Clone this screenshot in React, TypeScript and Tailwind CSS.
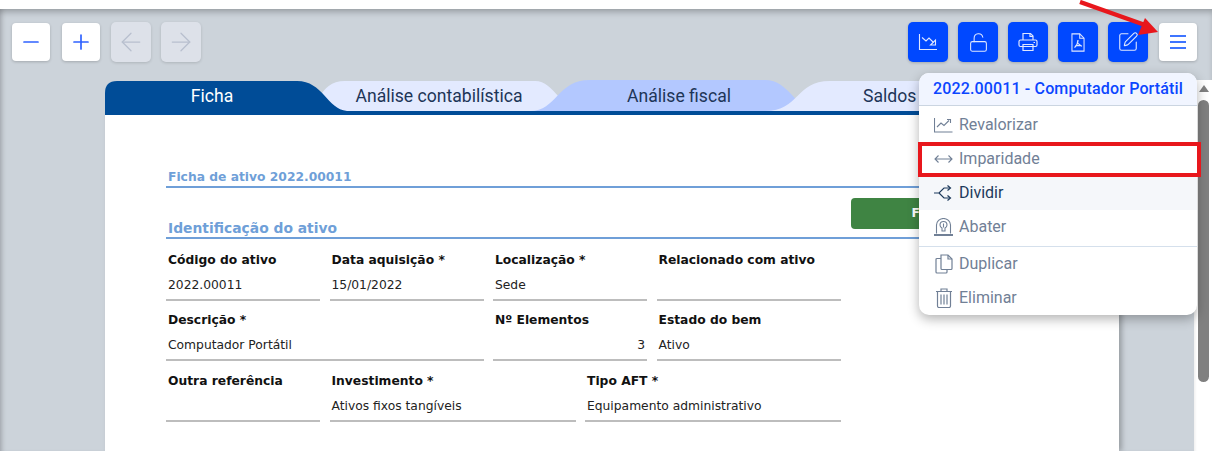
import React from 'react';
import { Minus, Plus, ArrowLeft, ArrowRight, LockOpen, SquarePen } from 'lucide-react';

const roboto = "font-['Roboto',sans-serif]";
const dejavu = "font-['DejaVu_Sans',sans-serif]";

const ChartDownIcon = () => (
    <svg width="20" height="20" viewBox="0 0 20 20" fill="none" stroke="currentColor" strokeWidth="1.1">
        <path d="M1.5 2v15.5h17.5" />
        <path d="M4 5.5l4 3.5 3-3 4.5 4.5" />
        <path d="M17.5 8v5h-5z" />
    </svg>
);

const PrintIcon = () => (
    <svg width="20" height="20" viewBox="0 0 20 20" fill="none" stroke="currentColor" strokeWidth="1.2">
        <path d="M5 8V1.5h7.5L15 4v4" />
        <path d="M12 1.5V4.5h3" />
        <rect x="1" y="8" width="18" height="6.5" rx="1.5" />
        <path d="M5 12.5h10v6H5z" />
        <path d="M15.5 10.5h1.5" />
    </svg>
);

const PdfIcon = () => (
    <svg width="18" height="19" viewBox="0 0 20 22" fill="none" stroke="currentColor" strokeWidth="1.2">
        <path d="M3 1h9l5 5v15H3z" />
        <path d="M12 1v5h5" />
        <path d="M10 8c0 4-2 7-4 9M10 12l4.500 3.500M7 14.500h7" strokeWidth="1.4" />
    </svg>
);

const ChartUpIcon = () => (
    <svg width="19" height="16" viewBox="0 0 19 16" fill="none" stroke="currentColor" strokeWidth="1.1">
        <path d="M.5 1v14h18" />
        <path d="M3 10l4-4 3 2.500 5-5" />
        <path d="M13 2.500h3.500V6" />
    </svg>
);

const SplitIcon = () => (
    <svg width="19" height="16" viewBox="0 0 19 16" fill="none" stroke="currentColor" strokeWidth="1.2">
        <path d="M0 8h5l5-5h6M5 8l5 5h6" />
        <path d="M13.500.5L16.500 3l-3 2.500M13.500 10.500l3 2.500-3 2.500" />
    </svg>
);

const TombIcon = () => (
    <svg width="19" height="18" viewBox="0 0 19 18" fill="none" stroke="currentColor" strokeWidth="1.1">
        <path d="M2.500 15.500V7a7 6.500 0 0 1 14 0v8.500" />
        <path d="M0 17h19" strokeWidth="2" />
        <path d="M6 7a3.500 3.500 0 0 1 7 0c0 1.500-1 2.500-2 3v3H8v-3c-1-.5-2-1.500-2-3z" />
        <path d="M9.500 5.500v4" />
    </svg>
);

const CopyIcon = () => (
    <svg width="18" height="20" viewBox="0 0 18 20" fill="none" stroke="currentColor" strokeWidth="1.2">
        <path d="M6 1h7l4 4v9.500a1 1 0 0 1-1 1H7a1 1 0 0 1-1-1z" />
        <path d="M13 1v4h4" />
        <path d="M6 4.500H2a1 1 0 0 0-1 1V18a1 1 0 0 0 1 1h9a1 1 0 0 0 1-1v-2.500" />
    </svg>
);

const TrashIcon = () => (
    <svg width="16" height="20" viewBox="0 0 16 20" fill="none" stroke="currentColor" strokeWidth="1.2">
        <path d="M0 3.500h16M5 3.500V1h6v2.500" />
        <path d="M1.500 3.500V18a1.500 1.500 0 0 0 1.500 1.500h10a1.500 1.500 0 0 0 1.500-1.500V3.500" />
        <path d="M5 6.500v10M8 6.500v10M11 6.500v10" />
    </svg>
);

const BlueButton = ({ children }: { children: React.ReactNode }) => (
    <button className="w-10 h-10 rounded-[5px] bg-[#0048ff] text-[#dfe7ff] flex items-center justify-center shadow-[0_1px_3px_rgba(0,0,0,0.2)]">
        {children}
    </button>
);

const WhiteButton = ({ children }: { children: React.ReactNode }) => (
    <button className="w-[38px] h-[38px] rounded-[4px] bg-white text-[#2f62ff] flex items-center justify-center shadow-[0_1px_3px_rgba(0,0,0,0.2)]">
        {children}
    </button>
);

const NavButton = ({ children }: { children: React.ReactNode }) => (
    <button className="w-10 h-10 rounded-[5px] bg-[#dde1e9] text-[#b8bfce] flex items-center justify-center shadow-[0_1px_3px_rgba(0,0,0,0.15)]">
        {children}
    </button>
);

const Field = ({ label, value, width, right }: { label: string; value?: string; width: string; right?: boolean }) => (
    <div className={`${width} border-b-2 border-[#bdbdbd] px-[2px] pb-[6px]`}>
        <div className="h-4 leading-4 text-[12.3px] font-bold text-[#111]">{label}</div>
        <div className={`h-4 mt-[9px] leading-4 text-[12.3px] text-[#222] ${right ? 'text-right' : ''}`}>{value}</div>
    </div>
);

const MenuItem = ({ icon, label, active }: { icon: React.ReactNode; label: string; active?: boolean }) => (
    <div className={`h-[34px] flex items-center pl-[15px] text-[16px] ${active ? 'bg-[#f5f7fa] text-[#1d3a5c]' : 'text-[#718096]'}`}>
        <span className="w-[19px] flex justify-center mr-[6px]">{icon}</span>
        {label}
    </div>
);

const App: React.FC = () => {
    return (
        <div className="relative w-[1212px] h-[451px] overflow-hidden bg-white flex flex-col">
            <div className="h-[9px] bg-white shrink-0" />
            <div className="relative flex-1 flex flex-col bg-[#ccd3da] shadow-[inset_0_5px_6px_-2px_rgba(0,0,0,0.25),inset_5px_0_5px_-3px_rgba(0,0,0,0.15)]">
                {/* toolbar */}
                <div className="h-[71px] shrink-0 flex items-start justify-between pl-3 pr-[15px] pt-[13px]">
                    <div className="flex items-center gap-3 h-10">
                        <WhiteButton><Minus size={24} strokeWidth={1.7} /></WhiteButton>
                        <WhiteButton><Plus size={24} strokeWidth={1.7} /></WhiteButton>
                        <div className="flex gap-[10px] -ml-px">
                            <NavButton><ArrowLeft size={30} strokeWidth={1} /></NavButton>
                            <NavButton><ArrowRight size={30} strokeWidth={1} /></NavButton>
                        </div>
                    </div>
                    <div className="flex items-center gap-[10px] h-10">
                        <BlueButton><ChartDownIcon /></BlueButton>
                        <BlueButton><LockOpen size={21} strokeWidth={1.2} /></BlueButton>
                        <BlueButton><PrintIcon /></BlueButton>
                        <BlueButton><PdfIcon /></BlueButton>
                        <BlueButton><SquarePen size={22} strokeWidth={1.2} /></BlueButton>
                        <div className="ml-px">
                            <WhiteButton>
                                <svg width="16" height="14" viewBox="0 0 16 14" fill="none" stroke="#0048ff" strokeWidth="1.5">
                                    <path d="M0 1h16M0 7h16M0 13h16" />
                                </svg>
                            </WhiteButton>
                        </div>
                    </div>
                </div>

                <div className="flex-1 flex min-h-0">
                    <div className="flex-1 pl-[105px] pr-[75px]">
                        {/* tabs */}
                        <div className={`relative h-[35px] flex ${roboto} text-[17.6px] text-[#1d3557]`}>
                            <svg className="absolute inset-0" width="1014" height="35" viewBox="0 0 1014 35">
                                <path d="M200 31C215 31 212 1 240 1H430C450 1 455 31 480 31Z" fill="#e3eaff" />
                                <path d="M425 31C452 31 452 0 485 0H660C685 0 690 31 715 31Z" fill="#b3c8ff" />
                                <path d="M660 31C695 31 690 1 725 1H1014V31Z" fill="#e3eaff" />
                                <path d="M0 35V13Q0 1 12 1H192C218 1 222 29 242 31H1014V35Z" fill="#004c97" />
                            </svg>
                            <div className="relative w-[214px] pt-[3px] text-center text-white">Ficha</div>
                            <div className="relative w-[240px] pt-[3px] text-center">Análise contabilística</div>
                            <div className="relative w-[240px] pt-[3px] text-center">Análise fiscal</div>
                            <div className="relative pl-[64px] pt-[3px]">Saldos</div>
                        </div>

                        {/* sheet */}
                        <div className={`h-[336px] bg-white pl-[61px] pr-[61px] pt-[52px] ${dejavu} shadow-[3px_0_5px_rgba(0,0,0,0.25)]`}>
                            <div className="h-[21px] border-b-2 border-[#6f9fd8] px-[2px] pt-[2px] leading-4 text-[12.3px] font-bold text-[#6f9fd8]">Ficha de ativo 2022.00011</div>
                            <div className="mt-[10px] h-[39px] flex items-start justify-between">
                                <div className="pl-[2px] pt-[21px] leading-[18px] text-[13.86px] font-bold text-[#6f9fd8]">Identificação do ativo</div>
                                <div className="w-[207px] h-[31px] rounded-[4px] bg-[#3f8443] flex items-center justify-center text-[12.3px] font-bold text-white">Fechar ativo</div>
                            </div>
                            <div className="h-[2px] bg-[#6f9fd8]" />
                            <div className="mt-[13px] flex flex-col gap-[11px]">
                                <div className="flex gap-[9.5px]">
                                    <Field width="w-[154px]" label="Código do ativo" value="2022.00011" />
                                    <Field width="w-[154px]" label="Data aquisição *" value="15/01/2022" />
                                    <Field width="w-[154px]" label="Localização *" value="Sede" />
                                    <Field width="w-[184px]" label="Relacionado com ativo" />
                                </div>
                                <div className="flex gap-[9.5px]">
                                    <Field width="w-[317.500px]" label="Descrição *" value="Computador Portátil" />
                                    <Field width="w-[154px]" label="Nº Elementos" value="3" right />
                                    <Field width="w-[184px]" label="Estado do bem" value="Ativo" />
                                </div>
                                <div className="flex gap-[9.5px] mt-px">
                                    <Field width="w-[154px]" label="Outra referência" />
                                    <Field width="w-[246px]" label="Investimento *" value="Ativos fixos tangíveis" />
                                    <Field width="w-[256px]" label="Tipo AFT *" value="Equipamento administrativo" />
                                </div>
                            </div>
                        </div>
                    </div>

                    {/* scrollbar */}
                    <div className="w-[18px] shrink-0 bg-white pl-1 pr-[3px] shadow-[inset_3px_0_3px_-2px_rgba(0,0,0,0.08)]">
                        <div className="mt-[5px] mx-auto w-0 h-0 border-l-[5.500px] border-r-[5.500px] border-b-[7px] border-l-transparent border-r-transparent border-b-[#808080]" />
                        <div className="mt-[8px] h-[282px] rounded-[6px] bg-[#808080]" />
                    </div>
                </div>
            </div>

            {/* actions menu */}
            <div className={`absolute left-[919px] top-[73px] w-[278px] h-[242px] overflow-hidden rounded-[10px] bg-white shadow-[0_4px_12px_rgba(0,0,0,0.3)] ${roboto}`}>
                <div className="h-[33px] flex items-center justify-center bg-[#f1f5ff] border-b border-[#cbd5e1] text-[16px] font-medium tracking-[0.14px] text-[#0b46ff]">
                    2022.00011 - Computador Portátil
                </div>
                <div className="h-[2px]" />
                <MenuItem icon={<ChartUpIcon />} label="Revalorizar" />
                <MenuItem icon={
                    <svg width="19" height="10" viewBox="0 0 19 10" fill="none" stroke="currentColor" strokeWidth="1.1">
                        <path d="M1 5h17M4.500 1.500L1 5l3.500 3.500M14.500 1.500L18 5l-3.500 3.500" />
                    </svg>
                } label="Imparidade" />
                <MenuItem active icon={<SplitIcon />} label="Dividir" />
                <MenuItem icon={<TombIcon />} label="Abater" />
                <div className="mt-[2px] h-[1px] bg-[#d5e0ec]" />
                <MenuItem icon={<CopyIcon />} label="Duplicar" />
                <MenuItem icon={<TrashIcon />} label="Eliminar" />
            </div>

            {/* annotations */}
            <div className="absolute left-[918px] top-[142px] w-[283px] h-[35px] border-[4px] border-[#e8171c]" />
            <svg className="absolute left-[1075px] top-0" width="90" height="40" viewBox="0 0 90 40">
                <path d="M5 2L70 25" stroke="#e8171c" strokeWidth="4.500" />
                <path d="M83 32L70 18L63 35Z" fill="#e8171c" />
            </svg>
        </div>
    );
};

export default App;
